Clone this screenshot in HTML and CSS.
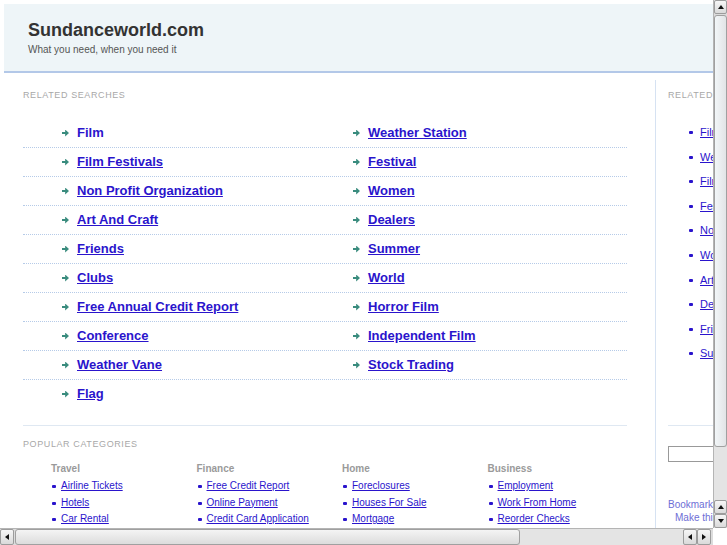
FILE: index.html
```html
<!DOCTYPE html>
<html lang="en">
<head>
    <meta charset="UTF-8">
    <title>Sundanceworld.com</title>
    <link rel="stylesheet" href="styles.css">
</head>
<body>
    <div class="window">
        <div class="viewport">
            <div class="page">
                <div class="header">
                    <h1 class="title">Sundanceworld.com</h1>
                    <p class="tagline">What you need, when you need it</p>
                </div>

                <div class="columns">
                    <div class="main">
                        <div class="label">Related Searches</div>

                        <div class="results">
                            <div class="row">
                                <a class="result hovered" href="#"><span class="arrow"></span>Film</a>
                                <a class="result" href="#"><span class="arrow"></span>Weather Station</a>
                            </div>
                            <div class="row">
                                <a class="result" href="#"><span class="arrow"></span>Film Festivals</a>
                                <a class="result" href="#"><span class="arrow"></span>Festival</a>
                            </div>
                            <div class="row">
                                <a class="result" href="#"><span class="arrow"></span>Non Profit Organization</a>
                                <a class="result" href="#"><span class="arrow"></span>Women</a>
                            </div>
                            <div class="row">
                                <a class="result" href="#"><span class="arrow"></span>Art And Craft</a>
                                <a class="result" href="#"><span class="arrow"></span>Dealers</a>
                            </div>
                            <div class="row">
                                <a class="result" href="#"><span class="arrow"></span>Friends</a>
                                <a class="result" href="#"><span class="arrow"></span>Summer</a>
                            </div>
                            <div class="row">
                                <a class="result" href="#"><span class="arrow"></span>Clubs</a>
                                <a class="result" href="#"><span class="arrow"></span>World</a>
                            </div>
                            <div class="row">
                                <a class="result" href="#"><span class="arrow"></span>Free Annual Credit Report</a>
                                <a class="result" href="#"><span class="arrow"></span>Horror Film</a>
                            </div>
                            <div class="row">
                                <a class="result" href="#"><span class="arrow"></span>Conference</a>
                                <a class="result" href="#"><span class="arrow"></span>Independent Film</a>
                            </div>
                            <div class="row">
                                <a class="result" href="#"><span class="arrow"></span>Weather Vane</a>
                                <a class="result" href="#"><span class="arrow"></span>Stock Trading</a>
                            </div>
                            <div class="row last">
                                <a class="result" href="#"><span class="arrow"></span>Flag</a>
                            </div>
                        </div>

                        <div class="popular">
                            <div class="label">Popular Categories</div>
                            <div class="categories">
                                <div class="category">
                                    <h3>Travel</h3>
                                    <ul>
                                        <li><a href="#">Airline Tickets</a></li>
                                        <li><a href="#">Hotels</a></li>
                                        <li><a href="#">Car Rental</a></li>
                                    </ul>
                                </div>
                                <div class="category">
                                    <h3>Finance</h3>
                                    <ul>
                                        <li><a href="#">Free Credit Report</a></li>
                                        <li><a href="#">Online Payment</a></li>
                                        <li><a href="#">Credit Card Application</a></li>
                                    </ul>
                                </div>
                                <div class="category">
                                    <h3>Home</h3>
                                    <ul>
                                        <li><a href="#">Foreclosures</a></li>
                                        <li><a href="#">Houses For Sale</a></li>
                                        <li><a href="#">Mortgage</a></li>
                                    </ul>
                                </div>
                                <div class="category">
                                    <h3>Business</h3>
                                    <ul>
                                        <li><a href="#">Employment</a></li>
                                        <li><a href="#">Work From Home</a></li>
                                        <li><a href="#">Reorder Checks</a></li>
                                    </ul>
                                </div>
                            </div>
                        </div>
                    </div>

                    <div class="side">
                        <div class="label">Related Searches</div>
                        <ul class="side-list">
                            <li><a href="#">Film</a></li>
                            <li><a href="#">Weather Station</a></li>
                            <li><a href="#">Film Festivals</a></li>
                            <li><a href="#">Festival</a></li>
                            <li><a href="#">Non Profit Organization</a></li>
                            <li><a href="#">Women</a></li>
                            <li><a href="#">Art And Craft</a></li>
                            <li><a href="#">Dealers</a></li>
                            <li><a href="#">Friends</a></li>
                            <li><a href="#">Summer</a></li>
                        </ul>
                        <div class="search-box">
                            <input type="text">
                        </div>
                        <div class="side-links">
                            <a class="bookmark" href="#">Bookmark this page</a>
                            <a class="homepage" href="#">Make this your homepage</a>
                        </div>
                    </div>
                </div>
            </div>
        </div>

        <!-- fake frame scrollbars -->
        <div class="vscroll">
            <div class="btn"><span class="tri up"></span></div>
            <div class="thumb v"><span class="grip"></span></div>
            <div class="track"></div>
            <div class="btn"><span class="tri up"></span></div>
            <div class="btn"><span class="tri down"></span></div>
        </div>
        <div class="hscroll">
            <div class="btn"><span class="tri left"></span></div>
            <div class="thumb h"><span class="grip"></span></div>
            <div class="track"></div>
            <div class="btn"><span class="tri left"></span></div>
            <div class="btn"><span class="tri right"></span></div>
        </div>
        <div class="corner"></div>
    </div>
</body>
</html>
```

FILE: styles.css
```css
body {
    margin: 0;
    overflow: hidden;
    font-family: "Liberation Sans", Arial, sans-serif;
    background: #fff;
}

.window {
    display: grid;
    grid-template-columns: 713px 14px;
    grid-template-rows: 528px 17px;
    width: 727px;
    height: 545px;
}

.viewport {
    overflow: hidden;
    background: #fff;
}

.page {
    width: 1000px;
    padding: 4px 0 0 4px;
}

/* header */
.header {
    height: 69px;
    background-color: #eef5f8;
    border-bottom: 2px solid #b3c8e8;
    padding: 15px 0 0 24px;
    box-sizing: border-box;
}

.title {
    margin: 0;
    font-size: 18px;
    line-height: 22px;
    font-weight: bold;
    color: #333;
}

.tagline {
    margin: 3px 0 0;
    font-size: 10px;
    line-height: 12px;
    color: #555;
}

.columns {
    display: flex;
    margin-top: 7px;
}

.label {
    font-size: 9px;
    line-height: 11px;
    letter-spacing: 0.6px;
    text-transform: uppercase;
    color: #a8a8a8;
}

/* main column */
.main {
    width: 652px;
    padding: 10px 28px 0 19px;
    border-right: 1px solid #d6e2f2;
    box-sizing: border-box;
}

.results {
    margin-top: 18px;
}

.row {
    display: grid;
    grid-template-columns: 291px 1fr;
    height: 28px;
    line-height: 28px;
    padding-left: 39px;
    border-bottom: 1px dotted #b6cbe8;
}

.row.last {
    border-bottom: none;
}

.result {
    display: flex;
    align-items: center;
    justify-self: start;
    font-size: 13px;
    font-weight: bold;
    color: #2a14cc;
}

.result.hovered {
    text-decoration: none;
}

.arrow {
    width: 7px;
    height: 7px;
    margin-right: 8px;
    background: #3a8c7e;
    clip-path: polygon(0 35%, 45% 35%, 45% 0, 100% 50%, 45% 100%, 45% 65%, 0 65%);
}

.popular {
    margin-top: 17px;
    border-top: 1px solid #dfe8f2;
    padding-top: 13px;
}

.categories {
    display: grid;
    grid-template-columns: repeat(4, 145.5px);
    padding-left: 28px;
    margin-top: 13px;
}

.category h3 {
    margin: 0 0 3px;
    font-size: 10px;
    line-height: 12px;
    color: #9a9a9a;
}

.category ul,
.side-list {
    list-style: none;
    margin: 0;
    padding: 0;
}

.category li {
    position: relative;
    padding-left: 10px;
    font-size: 10px;
    line-height: 16.5px;
}

.category li::before,
.side-list li::before {
    content: "";
    position: absolute;
    left: 1px;
    top: 7px;
    width: 4px;
    height: 3px;
    border-radius: 1px;
    background: #2a14cc;
}

.category a,
.side-list a {
    color: #2a14cc;
}

/* right sidebar */
.side {
    padding: 10px 0 0 12px;
    width: 300px;
}

.side-list {
    margin-top: 19px;
    padding-left: 21px;
}

.side-list li {
    position: relative;
    padding-left: 11px;
    font-size: 11px;
    line-height: 24.6px;
}

.side-list li::before {
    left: 0;
    top: 11px;
}

.search-box {
    margin-top: 59px;
    border-top: 1px solid #dfe8f2;
    padding-top: 19px;
}

.search-box input {
    width: 150px;
    height: 16px;
    margin: 0;
    border: 1px solid #999;
    box-sizing: border-box;
}

.side-links {
    margin-top: 35px;
    font-size: 10px;
    line-height: 13px;
}

.side-links a {
    display: block;
    color: #6e6ed6;
    text-decoration: none;
}

.side-links .homepage {
    padding-left: 7px;
}

/* scrollbars */
.vscroll {
    display: flex;
    flex-direction: column;
    background: #dcdcdc;
    border-left: 1px solid #b4b4b4;
}

.hscroll {
    display: flex;
    background: #dcdcdc;
    border-top: 1px solid #b4b4b4;
    padding-right: 2px;
}

.corner {
    background: #fff;
}

.btn {
    display: flex;
    align-items: center;
    justify-content: center;
    flex: none;
    background: linear-gradient(#f6f6f6, #dadada);
    border: 1px solid #9c9c9c;
    border-radius: 2px;
    box-sizing: border-box;
}

.vscroll .btn {
    height: 14px;
}

.hscroll .btn {
    width: 14px;
}

.thumb {
    display: flex;
    align-items: center;
    justify-content: center;
    background: linear-gradient(to right, #f2f6f8, #e2e4e6);
    border: 1px solid #a0a0a0;
    border-radius: 3px;
    box-sizing: border-box;
}

.thumb.v {
    height: 432px;
    margin-top: 1px;
}

.thumb.h {
    width: 505px;
    margin-left: 1px;
    background: linear-gradient(#f4f4f4, #dcdcdc);
}

.track {
    flex: 1;
    background: #e4e4e4;
}

.grip {
    width: 8px;
    height: 14px;
    background: radial-gradient(#b8b8b8 40%, transparent 45%) 0 0 / 2px 2px;
}

.thumb.h .grip {
    width: 16px;
    height: 8px;
}

.tri {
    width: 0;
    height: 0;
    border: 3px solid transparent;
}

.tri.up {
    border-bottom: 4px solid #111;
    border-top: none;
}

.tri.down {
    border-top: 4px solid #111;
    border-bottom: none;
}

.tri.left {
    border-right: 4px solid #111;
    border-left: none;
}

.tri.right {
    border-left: 4px solid #111;
    border-right: none;
}
```
